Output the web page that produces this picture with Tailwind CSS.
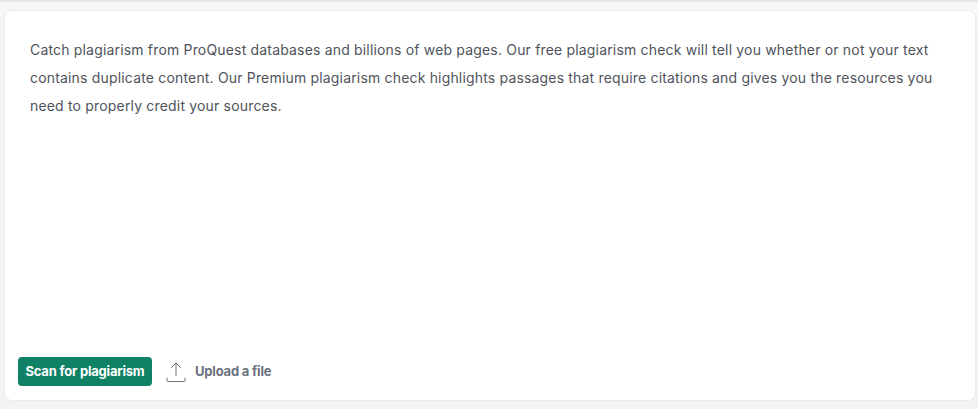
<!DOCTYPE html>
<html lang="en">
<head>
    <meta charset="UTF-8">
    <script src="https://cdn.jsdelivr.net/npm/@tailwindcss/browser@4"></script>
    <title>Plagiarism checker</title>
</head>
<body class="w-[978px] h-[409px] overflow-hidden bg-[#f2f3f5] font-['Inter',sans-serif]">
    <div class="h-[2px] bg-[#e8e8e8]"></div>
    <div class="pt-[8px] pl-[4px] pr-[2px] bg-gradient-to-b from-[#f8f8f8] to-[#f2f3f5] to-[30px]">
        <main class="h-[391px] bg-white rounded-[8px] border border-[#ececee] flex flex-col justify-between pl-[13px] pb-[14px]">
            <p class="pt-[25px] pl-[12px] pr-[30px] text-[14px] leading-[28.2px] tracking-[0.175px] text-[#4f535c]">Catch plagiarism from ProQuest databases and billions of web pages. Our free plagiarism check will tell you whether or not your text contains duplicate content. Our Premium plagiarism check highlights passages that require citations and gives you the resources you need to properly credit your sources.</p>
            <div class="flex items-center">
                <button class="h-[29px] w-[134px] rounded-[4px] bg-[#0f8266] text-white text-[13px] font-bold tracking-[-0.2px]">Scan for plagiarism</button>
                <svg class="ml-[14px]" width="20" height="22" viewBox="0 0 20 22" fill="none" stroke="#6b7280" stroke-width="1" stroke-linecap="round" stroke-linejoin="round">
                    <path d="M10 15V2M5.500 6.500 10 2l4.500 4.500"/>
                    <path d="M1 17v2.500q0 1 1 1h16q1 0 1-1V17"/>
                </svg>
                <span class="ml-[9px] text-[13px] font-bold tracking-[-0.2px] text-[#6b7280]">Upload a file</span>
            </div>
        </main>
    </div>
</body>
</html>
